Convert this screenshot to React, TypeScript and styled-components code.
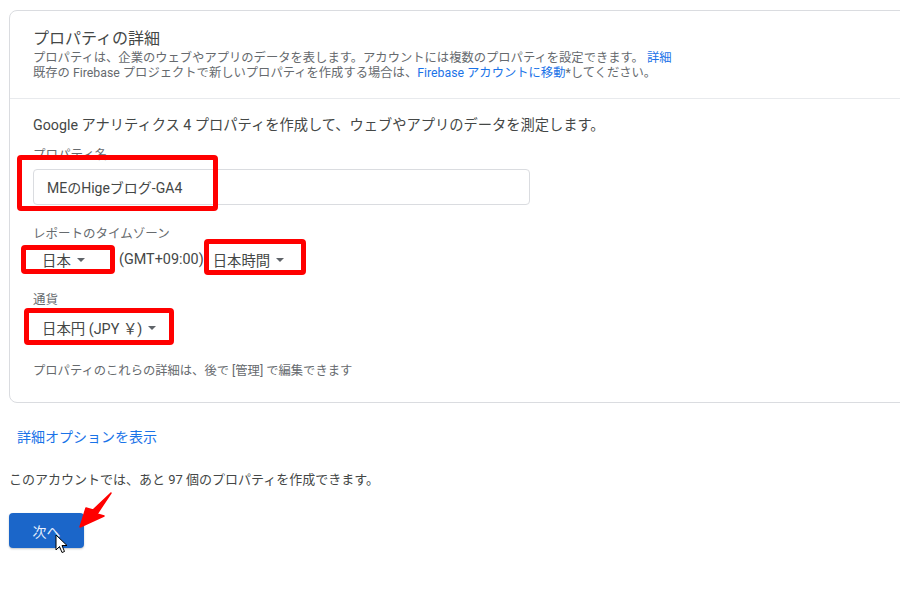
import styled, { createGlobalStyle } from "styled-components";

const GlobalStyle = createGlobalStyle`
  html, body {
    margin: 0;
    padding: 0;
    background: #ffffff;
    overflow: hidden;
  }
  body {
    font-family: Roboto, "Noto Sans CJK JP", "Noto Sans", sans-serif;
    color: #3c4043;
  }
`;

const Page = styled.div`
  position: relative;
  width: 900px;
  height: 592px;
  padding: 10px 0 0 9px;
  box-sizing: border-box;
  overflow: hidden;
`;

const Card = styled.section`
  width: 920px;
  border: 1px solid #dadce0;
  border-radius: 8px;
  background: #fff;
`;

const Header = styled.div`
  padding: 16px 23px 17px;
  border-bottom: 1px solid #e8eaed;
`;

const Title = styled.h2`
  margin: 0;
  font-size: 16px;
  line-height: 24px;
  font-weight: 400;
  color: #444746;
`;

const SubText = styled.p`
  margin: 0;
  font-size: 12.3px;
  line-height: 15px;
  color: #666a6e;
`;

const Link = styled.a`
  color: #1a73e8;
  text-decoration: none;
`;

const Body = styled.div`
  position: relative;
  padding: 16px 23px 23px;
`;

const Intro = styled.p`
  margin: 0;
  font-size: 14.25px;
  line-height: 20px;
  color: #444746;
`;

const Label = styled.div<{ $mt: number }>`
  margin-top: ${(p) => p.$mt}px;
  font-size: 12.5px;
  line-height: 14px;
  color: #666a6e;
`;

const TextInput = styled.div`
  margin-top: 7px;
  width: 497px;
  height: 36px;
  box-sizing: border-box;
  border: 1px solid #dadce0;
  border-radius: 4px;
  padding: 0 13px;
  display: flex;
  align-items: center;
  font-size: 14px;
  color: #444746;
`;

const Row = styled.div<{ $mt: number }>`
  margin-top: ${(p) => p.$mt}px;
  display: flex;
  align-items: center;
  height: 20px;
  font-size: 14.4px;
  color: #444746;
`;

const Select = styled.div<{ $w?: number }>`
  display: flex;
  align-items: center;
  gap: 6px;
  padding-left: 9px;
  width: ${(p) => (p.$w ? `${p.$w}px` : "auto")};
  box-sizing: border-box;
  white-space: nowrap;
`;

const Caret = styled.span`
  width: 0;
  height: 0;
  border-left: 4px solid transparent;
  border-right: 4px solid transparent;
  border-top: 4px solid #5f6368;
  margin-top: 1px;
`;

const Gmt = styled.span`
  margin-left: 6px;
  white-space: nowrap;
`;

const Hint = styled.p`
  margin: 26px 0 0;
  font-size: 12.3px;
  line-height: 16px;
  color: #666a6e;
`;

const Highlight = styled.div<{ $x: number; $y: number; $w: number; $h: number }>`
  position: absolute;
  left: ${(p) => p.$x}px;
  top: ${(p) => p.$y}px;
  width: ${(p) => p.$w}px;
  height: ${(p) => p.$h}px;
  box-sizing: border-box;
  border: 5px solid #ff0000;
  border-radius: 4px;
  pointer-events: none;
`;

const Footer = styled.div`
  padding-top: 24px;
`;

const MoreLink = styled(Link)`
  display: block;
  margin-left: 8px;
  font-size: 14px;
  line-height: 20px;
`;

const Remaining = styled.p`
  margin: 25px 0 0;
  font-size: 13px;
  line-height: 16px;
  color: #444746;
`;

const NextButton = styled.button`
  display: block;
  margin-top: 25px;
  width: 75px;
  height: 35px;
  border: none;
  border-radius: 4px;
  background: #1b66c9;
  color: #e8f0fe;
  font-family: inherit;
  font-size: 14px;
  box-shadow: 0 1px 2px rgba(60, 64, 67, 0.3);
`;

const Overlay = styled.svg<{ $x: number; $y: number }>`
  position: absolute;
  left: ${(p) => p.$x}px;
  top: ${(p) => p.$y}px;
  pointer-events: none;
`;

export default function App() {
  return (
    <>
      <GlobalStyle />
      <Page>
        <Card>
          <Header>
            <Title>プロパティの詳細</Title>
            <SubText>
              プロパティは、企業のウェブやアプリのデータを表します。アカウントには複数のプロパティを設定できます。{" "}
              <Link>詳細</Link>
            </SubText>
            <SubText>
              既存の Firebase プロジェクトで新しいプロパティを作成する場合は、
              <Link>Firebase アカウントに移動</Link>*してください。
            </SubText>
          </Header>
          <Body>
            <Intro>
              Google アナリティクス 4 プロパティを作成して、ウェブやアプリのデータを測定します。
            </Intro>
            <Label $mt={13}>プロパティ名</Label>
            <TextInput>MEのHigeブログ-GA4</TextInput>
            <Label $mt={22}>レポートのタイムゾーン</Label>
            <Row $mt={8}>
              <Select $w={80}>
                日本 <Caret />
              </Select>
              <Gmt>(GMT+09:00)</Gmt>
              <Select>
                日本時間 <Caret />
              </Select>
            </Row>
            <Label $mt={24}>通貨</Label>
            <Row $mt={10}>
              <Select>
                日本円 (JPY ￥) <Caret />
              </Select>
            </Row>
            <Hint>プロパティのこれらの詳細は、後で [管理] で編集できます</Hint>

            <Highlight $x={7} $y={56} $w={201} $h={56} />
            <Highlight $x={11} $y={146} $w={94} $h={29} />
            <Highlight $x={194} $y={140} $w={102} $h={36} />
            <Highlight $x={14} $y={209} $w={150} $h={37} />
          </Body>
        </Card>
        <Footer>
          <MoreLink>詳細オプションを表示</MoreLink>
          <Remaining>このアカウントでは、あと 97 個のプロパティを作成できます。</Remaining>
          <NextButton>次へ</NextButton>
        </Footer>

        <Overlay $x={76} $y={488} width="40" height="42" viewBox="0 0 40 42">
          <path
            d="M4 39 L10 20 L17 22 L35 5 L21 26 L28 28 Z"
            fill="#ff0000"
            stroke="#ff0000"
            strokeWidth="1.5"
            strokeLinejoin="round"
          />
        </Overlay>
        <Overlay $x={55} $y={534} width="14" height="22" viewBox="0 0 14 22">
          <path
            d="M1 1 L1 16 L4.5 12.5 L7 18.5 L9.5 17.5 L7 11.5 L12 11.5 Z"
            fill="#ffffff"
            stroke="#000000"
            strokeWidth="1"
            strokeLinejoin="round"
          />
        </Overlay>
      </Page>
    </>
  );
}
